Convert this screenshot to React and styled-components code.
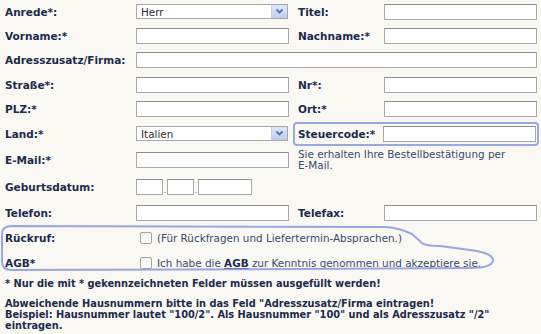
import React from "react"
import styled, {createGlobalStyle} from "styled-components"

const GlobalStyle = createGlobalStyle`
  html, body {
    margin: 0;
    padding: 0;
    background: #f9f8f3;
  }
  body {
    font-family: "DejaVu Sans", Verdana, sans-serif;
    color: #1c2a4c;
  }
`

const Page = styled.div`
  width: 541px;
  height: 334px;
  padding-left: 5px;
  box-sizing: border-box;
  overflow: hidden;
`

const Row = styled.div`
  display: grid;
  grid-template-columns: 131px 153px 9px 86px 153px;
  align-items: center;
  height: ${p => p.h}px;
`

const Label = styled.div`
  font-size: 10.5px;
  font-weight: bold;
  white-space: nowrap;
  grid-column: ${p => p.col || "auto"};
`

const Input = styled.div`
  height: 16px;
  box-sizing: border-box;
  background: #fff;
  border: 1px solid #a8a8a8;
  border-top-color: #8c8c8c;
  width: ${p => (p.w ? p.w + "px" : "auto")};
  grid-column: ${p => p.col || "auto"};
`

const Select = styled.div`
  height: 15px;
  box-sizing: border-box;
  width: 152px;
  background: #fff;
  border: 1px solid #a8a8a8;
  display: flex;
  align-items: center;
  justify-content: space-between;
  padding-left: 4px;
  font-size: 10.4px;
  color: #2c2c2c;
`

const SelectArrow = styled.div`
  width: 15px;
  height: 13px;
  background: linear-gradient(#dfe8f8, #bccdef);
  border-left: 1px solid #c2d0ec;
  display: flex;
  align-items: center;
  justify-content: center;
`

const Highlight = styled.div`
  grid-column: 3 / 6;
  margin-left: 4px;
  margin-right: -2px;
  height: 24px;
  box-sizing: border-box;
  border: 2px solid #9aa8e2;
  border-radius: 4px;
  display: grid;
  grid-template-columns: 85px 153px;
  align-items: center;
  padding-left: 3px;
`

const Note = styled.div`
  grid-column: 4 / 6;
  width: 215px;
  font-size: 10.4px;
  line-height: 11px;
  color: #3b4a6e;
  align-self: start;
  margin-top: 3px;
`

const DateGroup = styled.div`
  display: flex;
  align-items: flex-end;
`

const Dot = styled.span`
  width: 4px;
  font-size: 8px;
  line-height: 8px;
  color: #666;
  text-align: center;
`

const CalloutArea = styled.div`
  position: relative;
`

const Outline = styled.svg`
  position: absolute;
  left: -5px;
  top: 0;
  pointer-events: none;
`

const CheckCell = styled.div`
  grid-column: 2 / 6;
  display: flex;
  align-items: center;
  font-size: 10.4px;
  color: #3b4a6e;
  white-space: nowrap;
`

const Check = styled.span`
  width: 10px;
  height: 10px;
  border: 1px solid #a4a4a4;
  border-radius: 2px;
  background: linear-gradient(#f2f2f2, #ffffff);
  margin: 0 5px 0 4px;
  flex: none;
`

const Link = styled.span`
  font-weight: bold;
  text-decoration: underline;
  color: #1c2a4c;
`

const Hint = styled.p`
  margin: ${p => p.m || "0"};
  font-size: 9.8px;
  line-height: 11px;
  font-weight: bold;
  color: #1c2a4c;
`

const Chevron = () => (
  <svg width="9" height="7" viewBox="0 0 9 7">
    <path d="M1.5 1.5 L4.5 4.5 L7.5 1.5" fill="none" stroke="#4f71b5" strokeWidth="1.8" />
  </svg>
)

const App = () => {
  return (
    <Page>
      <GlobalStyle />
      <Row h={23}>
        <Label>Anrede*:</Label>
        <Select>Herr<SelectArrow><Chevron /></SelectArrow></Select>
        <Label col="4">Titel:</Label>
        <Input />
      </Row>
      <Row h={25}>
        <Label>Vorname:*</Label>
        <Input />
        <Label col="4">Nachname:*</Label>
        <Input />
      </Row>
      <Row h={24}>
        <Label>Adresszusatz/Firma:</Label>
        <Input col="2 / 6" />
      </Row>
      <Row h={25}>
        <Label>Straße*:</Label>
        <Input />
        <Label col="4">Nr*:</Label>
        <Input />
      </Row>
      <Row h={24}>
        <Label>PLZ:*</Label>
        <Input />
        <Label col="4">Ort:*</Label>
        <Input />
      </Row>
      <Row h={25}>
        <Label>Land:*</Label>
        <Select>Italien<SelectArrow><Chevron /></SelectArrow></Select>
        <Highlight>
          <Label>Steuercode:*</Label>
          <Input />
        </Highlight>
      </Row>
      <Row h={28}>
        <Label>E-Mail:*</Label>
        <Input />
        <Note>Sie erhalten Ihre Bestellbestätigung per E-Mail.</Note>
      </Row>
      <Row h={26}>
        <Label>Geburtsdatum:</Label>
        <DateGroup>
          <Input w={27} />
          <Dot>.</Dot>
          <Input w={27} />
          <Dot>.</Dot>
          <Input w={54} />
        </DateGroup>
      </Row>
      <Row h={25}>
        <Label>Telefon:</Label>
        <Input />
        <Label col="4">Telefax:</Label>
        <Input />
      </Row>
      <CalloutArea>
        <Outline width="541" height="50" viewBox="0 0 541 50">
          <path
            d="M12 1 L385 2 Q400 3 412 9 L422 18 Q426 21 440 21 L470 25 Q494 28 493 36 Q491 43 470 43 L300 44 L12 45 Q2 45 2 37 L2 9 Q2 1 12 1 Z"
            fill="none"
            stroke="#8d9de0"
            strokeWidth="2"
            strokeLinejoin="round"
            opacity="0.9"
          />
        </Outline>
        <Row h={26}>
          <Label>Rückruf:</Label>
          <CheckCell><Check />(Für Rückfragen und Liefertermin-Absprachen.)</CheckCell>
        </Row>
        <Row h={23}>
          <Label>AGB*</Label>
          <CheckCell><Check />Ich habe die&nbsp;<Link>AGB</Link>&nbsp;zur Kenntnis genommen und akzeptiere sie.</CheckCell>
        </Row>
      </CalloutArea>
      <Hint m="4px 0 0 0">* Nur die mit * gekennzeichneten Felder müssen ausgefüllt werden!</Hint>
      <Hint m="9px 0 0 0">
        Abweichende Hausnummern bitte in das Feld "Adresszusatz/Firma eintragen!<br />
        Beispiel: Hausnummer lautet "100/2". Als Hausnummer "100" und als Adresszusatz "/2" eintragen.
      </Hint>
    </Page>
  )
}

export default App
